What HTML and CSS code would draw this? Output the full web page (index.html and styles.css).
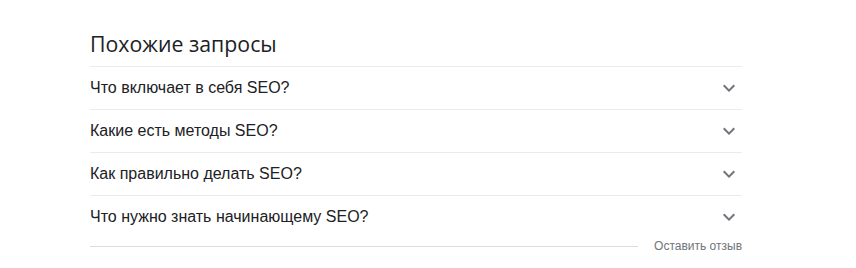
FILE: index.html
```html
<!DOCTYPE html>
<html lang="ru">
<head>
<meta charset="utf-8">
<link rel="stylesheet" href="styles.css">
</head>
<body>
<div class="block">
  <h2 class="title">Похожие запросы</h2>
  <div class="list">
    <div class="row"><span>Что включает в себя SEO?</span><svg class="chev" viewBox="0 0 24 24"><path d="M7.41 8.59L12 13.17l4.59-4.58L18 10l-6 6-6-6 1.41-1.41z"/></svg></div>
    <div class="row"><span>Какие есть методы SEO?</span><svg class="chev" viewBox="0 0 24 24"><path d="M7.41 8.59L12 13.17l4.59-4.58L18 10l-6 6-6-6 1.41-1.41z"/></svg></div>
    <div class="row"><span>Как правильно делать SEO?</span><svg class="chev" viewBox="0 0 24 24"><path d="M7.41 8.59L12 13.17l4.59-4.58L18 10l-6 6-6-6 1.41-1.41z"/></svg></div>
    <div class="row"><span>Что нужно знать начинающему SEO?</span><svg class="chev" viewBox="0 0 24 24"><path d="M7.41 8.59L12 13.17l4.59-4.58L18 10l-6 6-6-6 1.41-1.41z"/></svg></div>
  </div>
  <div class="footer">
    <div class="rule"></div>
    <span class="feedback">Оставить отзыв</span>
  </div>
</div>
</body>
</html>
```

FILE: styles.css
```css
html, body {
  margin: 0;
  padding: 0;
  background: #fff;
}
.block {
  width: 652px;
  margin-left: 90px;
  padding-top: 30px;
  font-family: "Liberation Sans", Arial, sans-serif;
  color: #202124;
}
.title {
  margin: 0;
  font-family: "Open Sans", Roboto, sans-serif;
  font-weight: 400;
  font-size: 21.3px;
  line-height: 28px;
  padding-bottom: 8px;
  color: #202124;
  border-bottom: 1px solid #ebebeb;
}
.row {
  display: flex;
  align-items: center;
  justify-content: space-between;
  height: 42px;
  border-bottom: 1px solid #ebebeb;
  font-size: 16px;
}
.row:last-child {
  border-bottom: none;
}
.chev {
  width: 24px;
  height: 24px;
  fill: #70757a;
  margin-right: 1px;
}
.footer {
  display: flex;
  align-items: center;
  height: 16px;
}
.rule {
  flex: 1;
  border-top: 1px solid #dadce0;
  margin-right: 16px;
}
.feedback {
  font-size: 12px;
  line-height: 16px;
  color: #70757a;
}
```
